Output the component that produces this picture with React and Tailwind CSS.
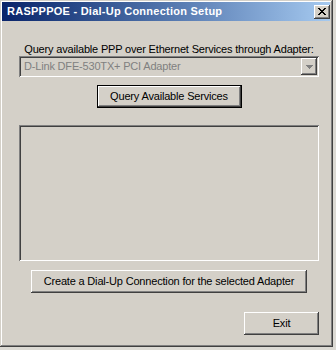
const raised =
  "shadow-[inset_-1px_-1px_0_#404040,inset_1px_1px_0_#ffffff,inset_-2px_-2px_0_#808080,inset_2px_2px_0_#d4d0c8]";
const sunken =
  "shadow-[inset_1px_1px_0_#808080,inset_-1px_-1px_0_#ffffff,inset_2px_2px_0_#404040,inset_-2px_-2px_0_#d4d0c8]";

function Button({ children, className = "", isDefault = false }) {
  if (isDefault) {
    return (
      <div className={`border border-black ${className}`}>
        <button
          type="button"
          className={`flex h-full w-full items-center justify-center bg-[#d4d0c8] text-black ${raised}`}
        >
          {children}
        </button>
      </div>
    );
  }

  return (
    <button
      type="button"
      className={`flex items-center justify-center bg-[#d4d0c8] text-black ${raised} ${className}`}
    >
      {children}
    </button>
  );
}

function CloseButton() {
  return (
    <div
      className={`flex h-[14px] w-[16px] items-center justify-center bg-[#d4d0c8] ${raised}`}
    >
      <svg width="8" height="7" viewBox="0 0 8 7" shapeRendering="crispEdges">
        <path
          d="M0 0h2v1H0zM6 0h2v1H6zM1 1h2v1H1zM5 1h2v1H5zM2 2h4v1H2zM3 3h2v1H3zM2 4h4v1H2zM1 5h2v1H1zM5 5h2v1H5zM0 6h2v1H0zM6 6h2v1H6z"
          fill="#000"
        />
      </svg>
    </div>
  );
}

export default function App() {
  return (
    <div className="h-[350px] w-[336px] bg-[#dcdad4] font-['Liberation_Sans',Arial,sans-serif] text-[11px] leading-[13px]">
      <div className="flex h-[347px] w-[333px] flex-col bg-[#d4d0c8] p-[2px] pr-[3px] shadow-[inset_-1px_-1px_0_#404040,inset_1px_1px_0_#d4d0c8,inset_-2px_-2px_0_#808080,inset_2px_2px_0_#ffffff]">
        {/* title bar */}
        <div className="flex h-[19px] items-center justify-between bg-gradient-to-r from-[#0a246a] to-[#a6caf0] pl-[5px]">
          <span className="text-[11px] font-bold tracking-[0.25px] text-white">
            RASPPPOE - Dial-Up Connection Setup
          </span>
          <CloseButton />
        </div>

        <div className="ml-[17px] flex w-[300px] flex-col items-center tracking-[-0.18px]">
          <p className="mt-[22px] h-[13px] text-black">
            Query available PPP over Ethernet Services through Adapter:
          </p>

          <div
            className={`mt-[0px] flex h-[21px] w-[300px] items-center justify-between bg-[#d4d0c8] pl-[5px] pr-[2px] ${sunken}`}
          >
            <span className="text-[#808080]">D-Link DFE-530TX+ PCI Adapter</span>
            <div
              className={`flex h-[17px] w-[16px] items-center justify-center bg-[#d4d0c8] ${raised}`}
            >
              <svg width="7" height="4" viewBox="0 0 7 4" shapeRendering="crispEdges">
                <path d="M0 0h7v1H0zM1 1h5v1H1zM2 2h3v1H2zM3 3h1v1H3z" fill="#808080" />
              </svg>
            </div>
          </div>

          <Button isDefault className="mt-[8px] h-[23px] w-[145px]">
            Query Available Services
          </Button>

          <div className={`mt-[17px] h-[136px] w-[300px] bg-[#d4d0c8] ${sunken}`} />

          <Button className="mt-[9px] h-[23px] w-[276px]">
            Create a Dial-Up Connection for the selected Adapter
          </Button>

          <div className="mt-[19px] flex w-full justify-end">
            <Button className="h-[23px] w-[75px]">Exit</Button>
          </div>
        </div>
      </div>
    </div>
  );
}
